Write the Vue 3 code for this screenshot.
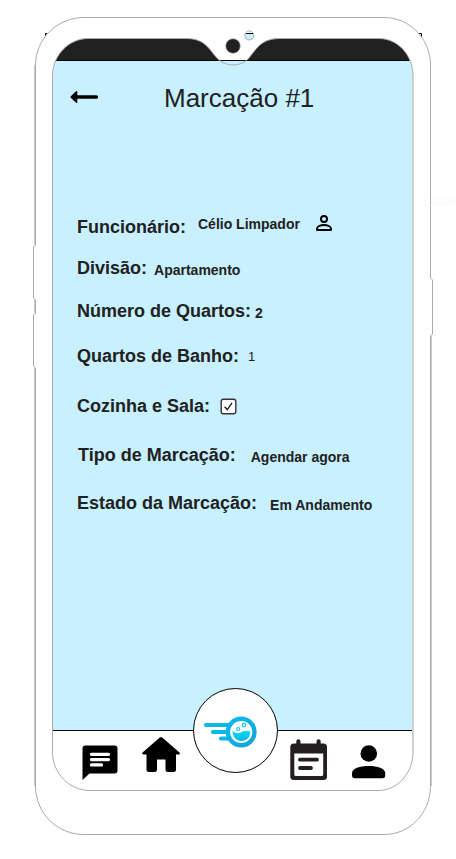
<script setup>
const rows = [
  { label: 'Funcionário:', value: 'Célio Limpador', kind: 'person', key: 'worker' },
  { label: 'Divisão:', value: 'Apartamento', key: 'division' },
  { label: 'Número de Quartos:', value: '2', key: 'rooms' },
  { label: 'Quartos de Banho:', value: '1', key: 'baths' },
  { label: 'Cozinha e Sala:', kind: 'check', key: 'kitchen' },
  { label: 'Tipo de Marcação:', value: 'Agendar agora', key: 'type' },
  { label: 'Estado da Marcação:', value: 'Em Andamento', key: 'state' },
]
</script>

<template>
  <main class="page">
    <section class="screen">
      <div class="status"></div>
      <header class="header">
        <svg class="back" width="30" height="14" viewBox="0 0 30 14">
          <path d="M7 7H26.500" stroke="#000" stroke-width="3.3" stroke-linecap="round" />
          <path d="M.8 6.200L6 1.200Q7.300.4 7.300 2V12Q7.300 13.600 6 12.800L.8 7.800Q0 7 .8 6.200Z" />
        </svg>
        <h1>Marcação #1</h1>
      </header>
      <div class="details">
        <div v-for="row in rows" :key="row.key" class="row" :class="row.key">
          <span class="label">{{ row.label }}</span>
          <span v-if="row.value" class="value">{{ row.value }}</span>
          <svg v-if="row.kind === 'person'" class="person" width="16" height="16" viewBox="0 0 16 16" fill="none" stroke="#000" stroke-width="1.9">
            <circle cx="8" cy="4" r="3.05" />
            <path d="M1 15V13.400C1 11.500 4.500 10 8 10S15 11.500 15 13.400V15Z" stroke-linejoin="round" />
          </svg>
          <svg v-if="row.kind === 'check'" class="check" width="17" height="17" viewBox="0 0 17 17">
            <rect x="1.200" y="1.200" width="14.600" height="14.600" rx="2.200" fill="#fff" stroke="#333" stroke-width="1.400" />
            <path d="M4.600 8.700L7.300 11.700L12 4.900" fill="none" stroke="#222" stroke-width="1.400" />
          </svg>
        </div>
      </div>
      <nav class="nav">
        <svg class="chat" width="36" height="35" viewBox="0 0 36 35">
          <path d="M3.500 .5H32.500Q35.500 .5 35.500 3.500V25.500Q35.500 28.500 32.500 28.500H7.500L.5 35V3.500Q.5 .5 3.500 .5Z" />
          <path d="M9.500 9.300H26.500M9.500 14.600H26.500M9.500 19.900H19.500" stroke="#fff" stroke-width="3.300" stroke-linecap="round" />
        </svg>
        <svg class="home" width="38" height="35" viewBox="0 0 38 35">
          <path d="M17.800.6Q19 -.4 20.200.6L37.500 15.400Q38.500 17.500 36.800 17.500H34V32.500Q34 35 31.500 35H25.800Q23.500 35 23.500 32.700V22.500H15V32.700Q15 35 12.500 35H7Q4.500 35 4.500 32.500V17.500H1.200Q-.5 17 .5 15.500Z" />
        </svg>
        <svg class="calendar" width="38" height="42" viewBox="0 0 38 42">
          <path fill="#231f20" fill-rule="evenodd" d="M4 4.500H6.300V2.500Q6.300.3 8.400.3T10.500 2.500V4.500H26.500V2.500Q26.500.3 28.600.3T30.700 2.500V4.500H33.500Q37 4.500 37 8V37.500Q37 41 33.500 41H4Q.3 41 .3 37.500V8Q.3 4.500 4 4.500ZM4.300 14.500V35.500Q4.300 37 6 37H31.500Q33.200 37 33.200 35.500V14.500Z" />
          <path d="M10 20.700H27M10 29H21" fill="none" stroke="#231f20" stroke-width="3.800" stroke-linecap="round" />
        </svg>
        <svg class="user" width="34" height="34" viewBox="0 0 34 34">
          <circle cx="16.800" cy="8.500" r="8.300" />
          <path d="M0 30V28C0 23.500 8 21 16.700 21S33.200 23.500 33.200 28V30.500Q33.200 33.300 30.500 33.300H2.800Q0 33.300 0 30Z" />
        </svg>
      </nav>
      <div class="brand">
        <svg width="54" height="34" viewBox="0 0 54 34" fill="none">
          <defs>
            <linearGradient id="cyan" x1="0" y1="0" x2="1" y2="1">
              <stop offset="0" stop-color="#08b9ed" /><stop offset="1" stop-color="#12a4da" />
            </linearGradient>
            <linearGradient id="smile" x1="0" y1="0" x2="0" y2="1">
              <stop offset="0" stop-color="#0bd8f5" /><stop offset="1" stop-color="#08b5e6" />
            </linearGradient>
          </defs>
          <path d="M3 10H30M10 17H28M18 23.500H30" stroke="#08b8e9" stroke-width="4.200" stroke-linecap="round" />
          <circle cx="38.200" cy="17" r="13.300" fill="#fff" stroke="url(#cyan)" stroke-width="4.400" />
          <path d="M29.500 16Q33 19.300 37.500 17.500Q42 14.800 47.300 16.500C47.500 22 43.500 26 38.500 26C33.500 26 29.500 22 29.500 16Z" fill="url(#smile)" />
          <circle cx="35.200" cy="14" r="1.500" stroke="#13c5ed" stroke-width="1.200" />
          <circle cx="41" cy="10.200" r="1.800" stroke="#13c5ed" stroke-width="1.200" />
        </svg>
      </div>
    </section>
    <svg class="frame" width="456" height="859" viewBox="0 0 456 859" fill="none">
      <path d="M45.500 36V33.500H47.500M418 33.500H421.500V37" stroke="#000" />
      <path fill="#fff" fill-rule="evenodd" d="M84 17.500H384C410 17.500 430.500 39 430.500 65V278L432.500 280V334L430.500 336V786C430.500 813 410 834.500 384 834.500H84C57 834.500 35.500 813 35.500 786V368L33.500 366V315L35.500 313V300L33.500 298V247L35.500 245V65C35.500 39 57 17.500 84 17.500ZM88 38.500C69 38.500 52.500 55 52.500 76V752C52.500 773 69 790.500 90 790.500H378C398 790.500 413 773 413 752V76C413 55 398 38.500 379 38.500H280C260 38.500 256 50 248 59Q242 65 233 65T218 59C209 50 206 38.500 186 38.500Z" />
      <path d="M219 60.500H247Q242 65 233 65T219 60.500Z" fill="#c8f0ff" />
      <path d="M219 60.500H247" stroke="#000" />
      <path stroke="#aaa" d="M84 17.500H384C410 17.500 430.500 39 430.500 65V278L432.500 280V334L430.500 336V786C430.500 813 410 834.500 384 834.500H84C57 834.500 35.500 813 35.500 786V368L33.500 366V315L35.500 313V300L33.500 298V247L35.500 245V65C35.500 39 57 17.500 84 17.500ZM88 38.500C69 38.500 52.500 55 52.500 76V752C52.500 773 69 790.500 90 790.500H378C398 790.500 413 773 413 752V76C413 55 398 38.500 379 38.500H280C260 38.500 256 50 248 59Q242 65 233 65T218 59C209 50 206 38.500 186 38.500Z" />
      <path stroke="#ccc" d="M34.500 65V245M34.500 300V313M34.500 368V786M431.500 336V786M412.500 76V752" />
      <circle cx="233" cy="46" r="7.300" fill="#212121" stroke="#aaa" stroke-width=".7" />
      <circle cx="249.300" cy="35.500" r="4.500" fill="#c8f0ff" stroke="#999" stroke-width=".8" />
      <path d="M245.500 33.500A4.500 4.500 0 0 1 253 33.500Z" fill="#fff" />
      <path d="M246 33.500H253" stroke="#000" />
    </svg>
    <span class="ghost">Label</span>
  </main>
</template>

<style>
body { margin: 0; background: #fff; }
</style>

<style scoped>
.page { position: relative; box-sizing: border-box; width: 456px; height: 859px; padding: 38px 43px 68px 52px; overflow: hidden; font-family: "Liberation Sans", Arial, sans-serif; color: #212121; }
.screen { position: relative; display: flex; flex-direction: column; width: 361px; height: 753px; overflow: hidden; border-radius: 36px; background: #c8f0ff; }
.status { box-sizing: border-box; height: 23px; flex: none; background: #212121; border-bottom: 1px solid #000; }
.header { display: flex; align-items: flex-start; height: 142px; flex: none; }
.back { margin: 29px 0 0 18px; }
h1 { margin: 21px 0 0 64px; font-size: 26px; line-height: 32px; font-weight: 400; white-space: nowrap; }
.details { flex: 1; display: flex; flex-direction: column; padding-left: 25px; }
.row { display: flex; align-items: flex-start; flex: none; height: 45px; font-weight: 700; white-space: nowrap; }
.label { font-size: 18px; line-height: 22px; }
.value { font-size: 14px; line-height: 18px; margin-top: 4px; }
.worker { height: 41px; padding-top: 13px; }
.worker .value { margin: -1px 0 0 12px; }
.person { margin: -1px 0 0 16px; }
.division { height: 43px; }
.division .value { margin-left: 7px; }
.rooms .value { margin-left: 4px; }
.baths { height: 50px; }
.baths .value { margin-top: 3px; margin-left: 9px; font-size: 13px; font-weight: 400; }
.kitchen { height: 49px; }
.check { margin: 3px 0 0 10px; }
.type { height: 48px; padding-left: 1px; }
.type .value { margin-left: 15px; }
.state .value { margin-left: 13px; }
.nav { box-sizing: border-box; display: flex; align-items: flex-start; height: 61px; flex: none; background: #fff; border-top: 1px solid #000; }
.chat { margin: 14px 0 0 30px; }
.home { margin: 6px 0 0 24px; }
.calendar { margin: 8px 0 0 110px; }
.user { margin: 14px 0 0 24px; }
.brand { position: absolute; left: 141px; top: 650px; box-sizing: border-box; width: 85px; height: 85px; border: 1px solid #000; border-radius: 50%; background: #fff; padding: 26px 0 0 9px; }
.brand svg { display: block; }
.frame { position: absolute; left: 0; top: 0; pointer-events: none; }
.ghost { position: absolute; left: 423px; top: 193px; font-size: 14px; line-height: 16px; color: #fafafa; }
</style>
